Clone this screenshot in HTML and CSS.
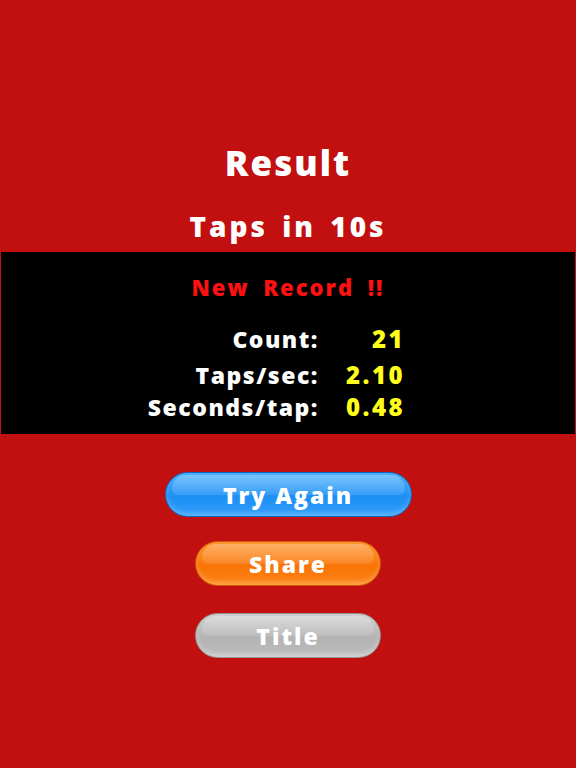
FILE: index.html
```html
<!DOCTYPE html>
<html>
<head>
<meta charset="utf-8">
<link rel="stylesheet" href="styles.css">
</head>
<body>
<div class="screen">
  <h1 class="title">Result</h1>
  <h2 class="subtitle">Taps in 10s</h2>
  <div class="panel">
    <div class="record">New Record !!</div>
    <div class="stats">
      <div class="label">Count:</div><div class="value">21</div>
      <div class="label">Taps/sec:</div><div class="value">2.10</div>
      <div class="label">Seconds/tap:</div><div class="value">0.48</div>
    </div>
  </div>
  <div class="buttons">
    <div class="btn btn-blue"><span>Try Again</span></div>
    <div class="btn btn-orange"><span>Share</span></div>
    <div class="btn btn-gray"><span>Title</span></div>
  </div>
</div>
</body>
</html>
```
FILE: styles.css
```css
html, body {
  margin: 0;
  padding: 0;
  background: #c20f0f;
}
.screen {
  width: 576px;
  height: 768px;
  display: flex;
  flex-direction: column;
  align-items: center;
  font-family: "Open Sans", "DejaVu Sans", sans-serif;
  font-weight: 800;
  color: #fff;
}
.title {
  margin: 138px 0 0 0;
  font-size: 35px;
  line-height: 50px;
  font-weight: 800;
  letter-spacing: 2px;
}
.subtitle {
  margin: 23px 0 0 0;
  font-size: 28px;
  line-height: 30px;
  font-weight: 800;
  letter-spacing: 3px;
  word-spacing: 4px;
}
.panel {
  margin-top: 11px;
  width: 574px;
  height: 182px;
  background: #000;
  display: flex;
  flex-direction: column;
  align-items: center;
}
.record {
  margin-top: 20px;
  color: #ff1010;
  font-size: 22px;
  line-height: 30px;
  letter-spacing: 2px;
  word-spacing: 6px;
}
.stats {
  margin-top: 20px;
  align-self: flex-start;
  display: grid;
  grid-template-columns: 320px 82px;
  width: 402px;
  font-size: 23px;
  line-height: 34px;
  letter-spacing: 1.5px;
}
.stats > div:nth-child(3), .stats > div:nth-child(4) {
  margin-top: 2px;
}
.stats > div:nth-child(5), .stats > div:nth-child(6) {
  margin-top: -2px;
}
.label {
  text-align: right;
  padding-right: 2px;
}
.value {
  text-align: right;
  color: #ffff1a;
  font-size: 24px;
  letter-spacing: 2.5px;
  margin-right: -2px;
}
.buttons {
  margin-top: 38px;
  display: flex;
  flex-direction: column;
  align-items: center;
  gap: 24px;
}
.btn {
  height: 45px;
  border-radius: 23px;
  display: flex;
  align-items: center;
  justify-content: center;
  font-size: 23px;
  letter-spacing: 2px;
  color: #fff;
  box-sizing: border-box;
  position: relative;
  overflow: hidden;
}
.btn span {
  position: relative;
  z-index: 1;
}
.btn::before {
  content: "";
  position: absolute;
  left: 6px;
  right: 6px;
  top: 2px;
  height: 20px;
  border-radius: 18px 18px 8px 8px;
  background: linear-gradient(rgba(255,255,255,0.28), rgba(255,255,255,0.1));
}
.btn-gray { margin-top: 3px; }
.btn-blue {
  width: 247px;
  background: linear-gradient(#48b0ff, #1c8ff4 55%, #2a98f8 85%, #3aa4fb);
  border: 1px solid #1268c0;
  box-shadow: inset 0 -3px 5px rgba(255,255,255,0.2);
}
.btn-orange {
  width: 186px;
  background: linear-gradient(#ff9530, #f87406 55%, #fb7e10 85%, #ff8d22);
  border: 1px solid #d05800;
  box-shadow: inset 0 -3px 5px rgba(255,255,255,0.2);
}
.btn-gray {
  width: 186px;
  background: linear-gradient(#cfcfcf, #b3b3b3 55%, #bababa 85%, #c6c6c6);
  border: 1px solid #939393;
  box-shadow: inset 0 -3px 5px rgba(255,255,255,0.25);
}
```
